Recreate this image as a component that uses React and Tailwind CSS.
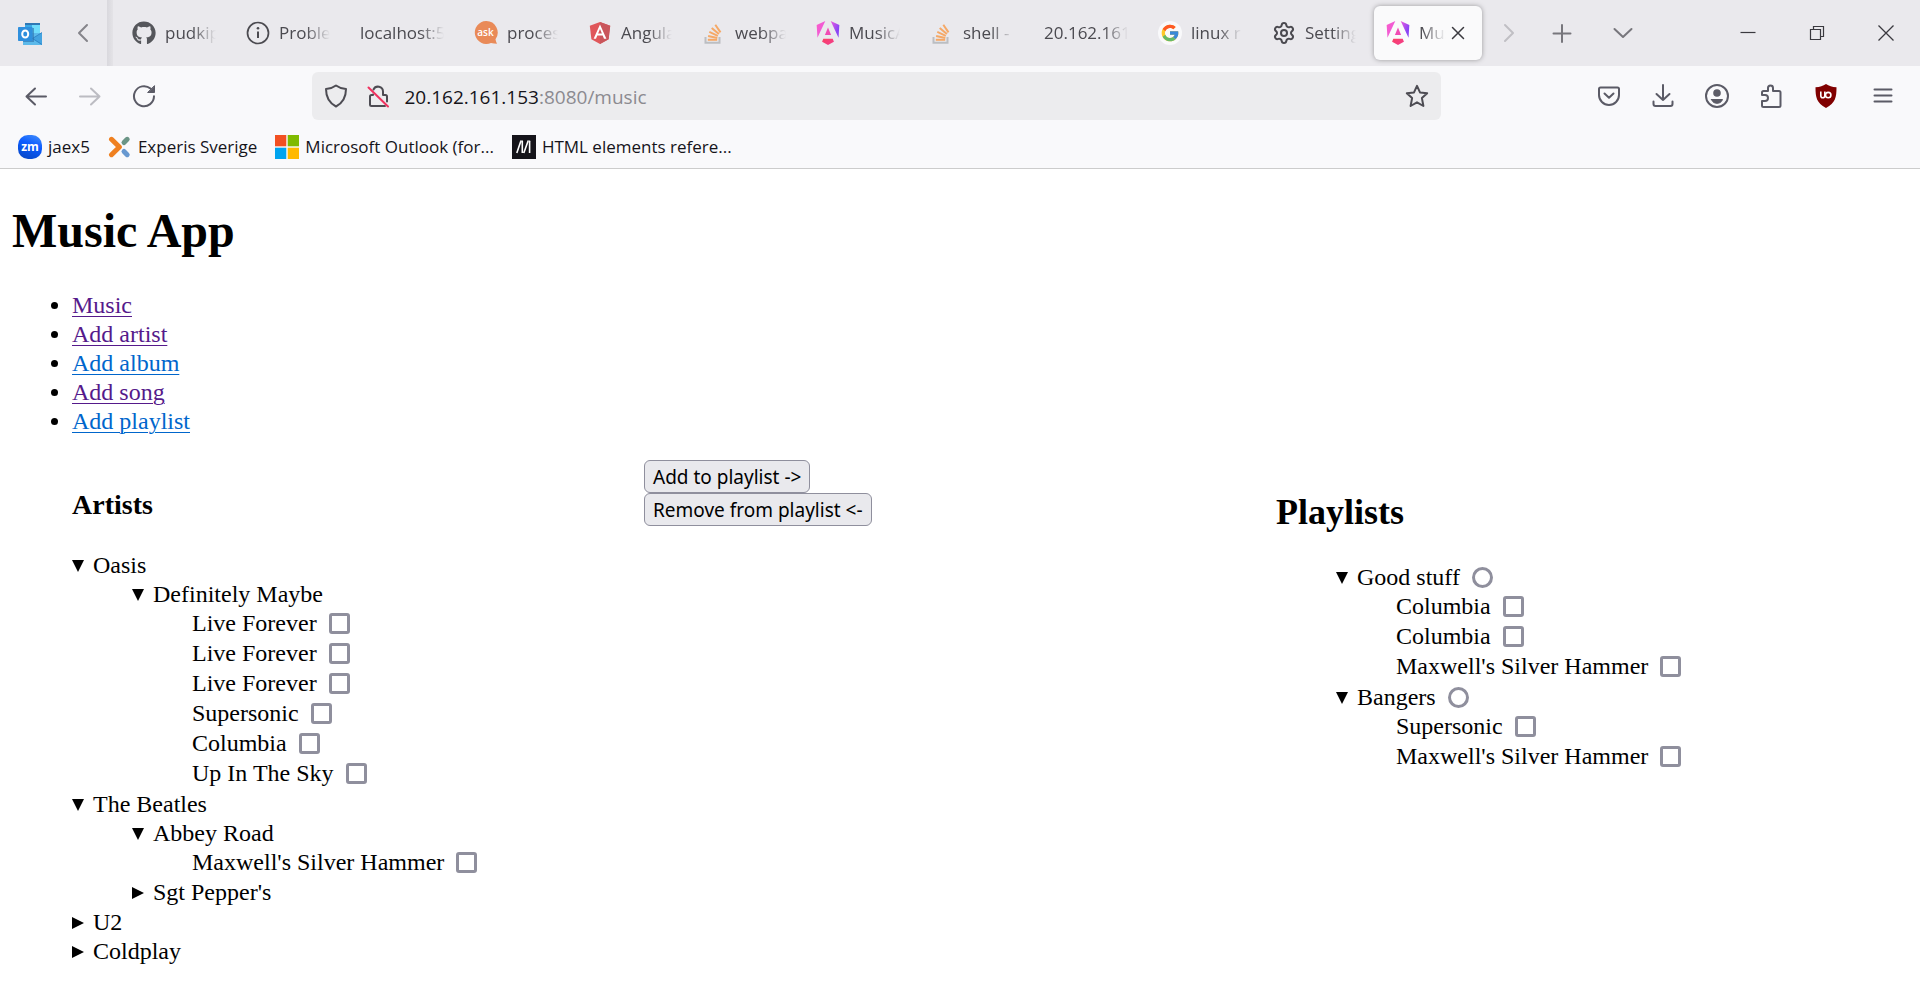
import React from "react";
import { FaGithub } from "react-icons/fa";
import { FcGoogle } from "react-icons/fc";
import { Settings } from "lucide-react";

/* ---------- tab and bookmark icons ---------- */

const OutlookIcon = () => (
  <svg viewBox="0 0 24 24" className="size-6 shrink-0" aria-hidden="true">
    <rect x="7" y="2" width="15" height="3" fill="#2f78b5" />
    <rect x="7" y="4" width="8" height="9" fill="#3aa8e6" />
    <rect x="14" y="4" width="8" height="9" fill="#6fdcfb" />
    <path d="M5 12h19v12H5z" fill="#5cb9ea" />
    <path d="M14 17.500l10-6V24z" fill="#44a3e0" />
    <path d="M24 11.500l-9.500 6 9.500 6" fill="none" stroke="#2d7fc0" strokeWidth="0.800" />
    <path d="M7 7h9v14H5z" fill="#2b6ea8" opacity="0.600" />
    <rect x="0" y="6" width="14.500" height="14" rx="0.800" fill="#2f8fdd" />
    <ellipse cx="7.200" cy="13" rx="3" ry="3.500" fill="none" stroke="#fff" strokeWidth="2" />
  </svg>
);

const InfoIcon = () => (
  <svg viewBox="0 0 24 24" className="size-6 shrink-0" fill="none" stroke="#4b4a50" strokeWidth="1.700" aria-hidden="true">
    <circle cx="12" cy="12" r="10.500" />
    <path d="M12 10.500v6.500" strokeWidth="2" />
    <circle cx="12" cy="7.200" r="1.300" fill="#4b4a50" stroke="none" />
  </svg>
);

const AskIcon = () => (
  <svg viewBox="0 0 24 24" className="size-6 shrink-0" aria-hidden="true">
    <path d="M12 0a11.500 11.500 0 1 0 5 22c2 .3 4 .8 6 .8-.8-1.400-1.300-3-1.500-4.600A11.500 11.500 0 0 0 12 0z" fill="#e98a58" />
    <text x="11.500" y="15" textAnchor="middle" fontSize="10" fontWeight="600" fontFamily="Open Sans, sans-serif" fill="#fff">ask</text>
  </svg>
);

const AngularShieldIcon = () => (
  <svg viewBox="0 0 24 24" className="size-6 shrink-0" aria-hidden="true">
    <path d="M12 1l10.200 3.700-1.600 13.500L12 23l-8.600-4.800L1.800 4.700z" fill="#e0575b" />
    <path d="M12 1l10.200 3.700-1.600 13.500L12 23z" fill="#c9555b" />
    <path d="M12 3.500L5.600 17.800H8l1.300-3.200h5.400l1.300 3.200h2.400zm0 4.600l1.900 4.500h-3.800z" fill="#fff" />
  </svg>
);

const StackIcon = () => (
  <svg viewBox="0 0 24 24" className="size-6 shrink-0" fill="none" aria-hidden="true">
    <path d="M3.500 16v5.800h14V16" stroke="#bcbec2" strokeWidth="2" />
    <g stroke="#f5a866" strokeWidth="2">
      <path d="M5.800 18.800h9.400" />
      <path d="M6.100 15l9.200 1.900" />
      <path d="M7.300 10.900l8.500 3.900" />
      <path d="M9.700 7.100l7.200 6" />
      <path d="M13.300 3.800l5.200 7.600" />
    </g>
  </svg>
);

const AngularIcon = ({ id }) => (
  <svg viewBox="0 0 24 24" className="size-6 shrink-0" aria-hidden="true">
    <defs>
      <linearGradient id={id + "-side"} x1="0" y1="0" x2="1" y2="0.300">
        <stop offset="0" stopColor="#fb5cc8" />
        <stop offset="0.600" stopColor="#e95be0" />
        <stop offset="1" stopColor="#8a45f5" />
      </linearGradient>
      <linearGradient id={id + "-base"} x1="0" y1="0" x2="1" y2="1">
        <stop offset="0" stopColor="#fb3f62" />
        <stop offset="1" stopColor="#f03f92" />
      </linearGradient>
    </defs>
    <path
      fill={"url(#" + id + "-side)"}
      d="M14.692 0l7.832 16.855.814-12.856L14.692 0ZM9.308 0 .662 3.999l.814 12.856L9.308 0Z"
    />
    <path fill="#f04cb4" d="M8.903 13.930h6.198L12 6.396 8.903 13.930Z" />
    <path fill={"url(#" + id + "-base)"} d="M16.712 17.711H7.288l-1.204 2.916L12 24l5.916-3.373-1.204-2.916Z" />
  </svg>
);

const GoogleIcon = () => (
  <span className="flex size-6 shrink-0 items-center justify-center rounded-full bg-[#f9f9fb]">
    <FcGoogle className="size-5 opacity-85" />
  </span>
);

const ZoomIcon = () => (
  <svg viewBox="0 0 24 24" className="size-6 shrink-0" aria-hidden="true">
    <defs>
      <linearGradient id="zm-blue" x1="0.700" y1="0" x2="0.300" y2="1">
        <stop offset="0" stopColor="#3b86fb" />
        <stop offset="0.400" stopColor="#0b5cff" />
        <stop offset="1" stopColor="#0848c8" />
      </linearGradient>
    </defs>
    <rect width="24" height="24" rx="10" fill="url(#zm-blue)" />
    <text x="12" y="15.500" textAnchor="middle" fontSize="12" fontWeight="700" fontFamily="Open Sans, sans-serif" fill="#fff">zm</text>
  </svg>
);

const ExperisIcon = () => (
  <svg viewBox="0 0 24 24" className="size-6 shrink-0" fill="none" strokeWidth="5" strokeLinecap="round" aria-hidden="true">
    <path d="M16 7.500l3.200-3.200" stroke="#6b9586" />
    <path d="M16 16.500l3.200 3.200" stroke="#6798d0" />
    <path d="M3.500 4.300l7.900 7.700-7.900 7.700" stroke="#ef8020" strokeLinejoin="round" />
  </svg>
);

const MicrosoftIcon = () => (
  <svg viewBox="0 0 24 24" className="size-6 shrink-0" aria-hidden="true">
    <path d="M0 0h11.300v11.300H0z" fill="#f25022" />
    <path d="M12.700 0H24v11.300H12.700z" fill="#7fba00" />
    <path d="M0 12.700h11.300V24H0z" fill="#00a4ef" />
    <path d="M12.700 12.700H24V24H12.700z" fill="#ffb900" />
  </svg>
);

const MdnIcon = () => (
  <svg viewBox="0 0 24 24" className="size-6 shrink-0" aria-hidden="true">
    <path d="M0 0h24v24H0z" fill="#15141a" />
    <path d="M4.800 18L8.800 6.200M10.300 6v12M11.800 18L16 6.200M17.600 6v12" fill="none" stroke="#fff" strokeWidth="1.600" />
    <path d="M8 6h3M15.200 6h3" fill="none" stroke="#fff" strokeWidth="1" />
  </svg>
);

/* ---------- toolbar glyphs ---------- */

const Glyph = ({ children, className = "text-[#5b5b66]" }) => (
  <svg
    viewBox="0 0 24 24"
    className={"size-6 shrink-0 " + className}
    fill="none"
    stroke="currentColor"
    strokeWidth="2"
    strokeLinecap="round"
    strokeLinejoin="round"
    aria-hidden="true"
  >
    {children}
  </svg>
);

const IconButton = ({ label, className = "w-[54px]", children }) => (
  <button type="button" aria-label={label} className={"flex h-12 shrink-0 items-center justify-center " + className}>
    {children}
  </button>
);

const tabs = [
  { icon: <FaGithub className="size-6 shrink-0 text-[#55565b]" />, title: "pudkipz" },
  { icon: <InfoIcon />, title: "Problem" },
  { title: "localhost:5000" },
  { icon: <AskIcon />, title: "process" },
  { icon: <AngularShieldIcon />, title: "Angular" },
  { icon: <StackIcon />, title: "webpack" },
  { icon: <AngularIcon id="tab-music" />, title: "MusicApp" },
  { icon: <StackIcon />, title: "shell - how" },
  { title: "20.162.161.153" },
  { icon: <GoogleIcon />, title: "linux run" },
  { icon: <Settings className="size-6 shrink-0 text-[#4b4a50]" strokeWidth={2} />, title: "Settings" },
];

const fade = "[mask-image:linear-gradient(to_right,black_calc(100%-24px),transparent)]";

const TabStrip = () => (
  <div className="flex h-[66px] items-center bg-[#eae9ed] text-[17px] leading-6 text-[#4b4a50]">
    <button type="button" aria-label="Outlook" className="ml-[18px] shrink-0">
      <OutlookIcon />
    </button>
    <IconButton label="Scroll tabs left" className="ml-[17px] w-12">
      <Glyph className="text-[#85848a]">
        <path d="M16 4l-8 8 8 8" />
      </Glyph>
    </IconButton>
    <span className="mr-[7px] h-full w-1.5 shrink-0 bg-linear-to-r from-[#d9d8dd] to-[#e4e3e7]" />
    <div role="tablist" className="flex min-w-0 gap-1.5">
      {tabs.map((tab, i) => (
        <button key={i} type="button" role="tab" aria-selected="false" className="flex h-[54px] w-[108px] shrink-0 items-center gap-[9px] px-3">
          {tab.icon}
          <span className={"min-w-0 flex-1 overflow-hidden text-left whitespace-nowrap " + fade}>{tab.title}</span>
        </button>
      ))}
      <div className="flex h-[54px] w-[108px] shrink-0 items-center rounded-md bg-[#fafafb] pr-3 pl-3 shadow-[0_0_5px_rgba(0,0,0,0.35)]">
        <button type="button" role="tab" aria-selected="true" className="flex min-w-0 flex-1 items-center gap-[9px]">
          <AngularIcon id="tab-active" />
          <span className={"min-w-0 flex-1 overflow-hidden text-left whitespace-nowrap " + fade}>MusicApp</span>
        </button>
        <button type="button" aria-label="Close tab" className="shrink-0">
          <svg viewBox="0 0 24 24" className="size-6" fill="none" stroke="#3a393f" strokeWidth="1.500" strokeLinecap="round" aria-hidden="true">
            <path d="M6.500 6.500l11 11M17.500 6.500l-11 11" />
          </svg>
        </button>
      </div>
    </div>
    <IconButton label="Scroll tabs right" className="w-[53px]">
      <Glyph className="text-[#c0bfc4]">
        <path d="M8 4l8 8-8 8" />
      </Glyph>
    </IconButton>
    <IconButton label="New tab">
      <Glyph className="text-[#77767c]">
        <path d="M12 4v17M3.500 12.500h17" />
      </Glyph>
    </IconButton>
    <IconButton label="List all tabs" className="ml-[7px] w-[54px]">
      <Glyph className="text-[#77767c]">
        <path d="M3.500 8l8.500 8 8.500-8" />
      </Glyph>
    </IconButton>
    <div className="ml-auto flex">
      <IconButton label="Minimise" className="w-[69px]">
        <svg viewBox="0 0 24 24" className="size-6" stroke="#3a393f" strokeWidth="1.200" aria-hidden="true">
          <path d="M4.500 11.500h15" />
        </svg>
      </IconButton>
      <IconButton label="Restore" className="w-[69px]">
        <svg viewBox="0 0 24 24" className="size-6" fill="none" stroke="#3a393f" strokeWidth="1.200" aria-hidden="true">
          <path d="M5.500 8.500h10v10h-10zM8.500 8.500v-3h10v10h-3" />
        </svg>
      </IconButton>
      <IconButton label="Close" className="w-[69px]">
        <svg viewBox="0 0 24 24" className="size-6" stroke="#3a393f" strokeWidth="1.300" aria-hidden="true">
          <path d="M4.500 4.500l15 15M19.500 4.500l-15 15" />
        </svg>
      </IconButton>
    </div>
  </div>
);

const NavBar = () => (
  <div className="flex items-center py-1.5 pr-2">
    <div className="ml-[9px] flex">
      <IconButton label="Back">
        <Glyph>
          <path d="M22 12.500H2.500M11 4.500l-8.500 8 8.500 8" />
        </Glyph>
      </IconButton>
      <IconButton label="Forward">
        <Glyph className="text-[#bcbcc2]">
          <path d="M2 12.500h19.500M13 4.500l8.500 8-8.500 8" />
        </Glyph>
      </IconButton>
      <IconButton label="Reload">
        <Glyph>
          <path d="M18.500 4.600A10 10 0 1 0 22 12.300" />
          <path d="M22.500 2v6.500H16z" fill="currentColor" strokeWidth="1" />
        </Glyph>
      </IconButton>
    </div>
    <div className="mx-auto flex h-12 w-[59%] items-center rounded-md bg-[#ececee] pr-3 pl-3">
      <Glyph className="text-[#4d4c53]">
        <path d="M12 1.500c3 2.200 6.200 3.300 10 3.600 0 8-2.500 13.600-10 17.400C4.500 18.700 2 13.100 2 5.100c3.800-.3 7-1.400 10-3.600z" />
      </Glyph>
      <Glyph className="ml-[18px] text-[#4d4c53]">
        <path d="M7.500 5.500a5 5 0 0 1 9.500 2v3.500h2.500a1.500 1.500 0 0 1 1.500 1.500v5M7 10.500v.500H5.500A1.500 1.500 0 0 0 4 12.500v8A1.500 1.500 0 0 0 5.500 22H19" />
        <path d="M2.500 3.500l19.500 19" stroke="#f0325f" />
      </Glyph>
      <div className="ml-3.5 flex min-w-0 flex-1 pt-0.5 text-[19px] leading-6">
        <span className="text-[#15141a]">20.162.161.153</span>
        <span className="text-[#8b8a90]">:8080/music</span>
      </div>
      <button type="button" aria-label="Bookmark this page">
        <Glyph className="text-[#4d4c53]">
          <path d="M12 1.800l3 6.600 7.200.8-5.300 4.900 1.500 7.900-6.400-3.700-6.400 3.700 1.500-7.900-5.300-4.900 7.200-.8z" />
        </Glyph>
      </button>
    </div>
    <div className="flex">
      <IconButton label="Save to Pocket">
        <Glyph>
          <path d="M3.500 3.500h17a1.500 1.500 0 0 1 1.500 1.500v6a10 10 0 0 1-20 0V5a1.500 1.500 0 0 1 1.500-1.500z" />
          <path d="M7.500 9.500l4.500 4.300 4.500-4.300" />
        </Glyph>
      </IconButton>
      <IconButton label="Downloads">
        <Glyph>
          <path d="M12 1v15M5.500 10l6.500 6 6.500-6M2.500 17.500v2.500a2 2 0 0 0 2 2h15a2 2 0 0 0 2-2v-2.500" />
        </Glyph>
      </IconButton>
      <IconButton label="Account">
        <Glyph>
          <circle cx="12" cy="12" r="11" />
          <circle cx="12" cy="9" r="2.800" fill="currentColor" />
          <path d="M6.500 15.500h11c-1 2.800-3 3.800-5.500 3.800s-4.500-1-5.500-3.800z" fill="currentColor" strokeWidth="1" />
        </Glyph>
      </IconButton>
      <IconButton label="Extensions">
        <Glyph>
          <path d="M3 11V8.500A1.500 1.500 0 0 1 4.500 7H9V4a2.500 2.500 0 0 1 5 0v3h6a1.500 1.500 0 0 1 1.500 1.500v13A1.500 1.500 0 0 1 20 23H4.500A1.500 1.500 0 0 1 3 21.500V17h3a3 3 0 0 0 0-6z" />
        </Glyph>
      </IconButton>
      <IconButton label="uBlock Origin" className="w-[57px]">
        <svg viewBox="0 0 24 24" className="size-6" aria-hidden="true">
          <path d="M12 0c3 2 6 3 10.500 3.200C22.500 13 21.500 19 12 24 2.500 19 1.500 13 1.500 3.200 6 3 9 2 12 0z" fill="#800000" />
          <path d="M6.800 7.500v4.300a2 2 0 0 0 4 0V7.500" fill="none" stroke="#fff" strokeWidth="1.600" />
          <circle cx="14.200" cy="11.100" r="2.700" fill="none" stroke="#fff" strokeWidth="1.600" />
        </svg>
      </IconButton>
      <IconButton label="Menu" className="w-[57px]">
        <Glyph>
          <path d="M3.500 5.500h17M3.500 11.500h17M3.500 17.500h17" />
        </Glyph>
      </IconButton>
    </div>
  </div>
);

const bookmarks = [
  { icon: <ZoomIcon />, title: "jaex5" },
  { icon: <ExperisIcon />, title: "Experis Sverige" },
  { icon: <MicrosoftIcon />, title: "Microsoft Outlook (for..." },
  { icon: <MdnIcon />, title: "HTML elements refere..." },
];

const BookmarksBar = () => (
  <div className="flex h-[42px] items-center gap-[18px] pl-[18px] text-[17px] leading-6 text-[#15141a]">
    {bookmarks.map((b) => (
      <a key={b.title} href="#" className="flex items-center gap-1.5 whitespace-nowrap">
        {b.icon}
        {b.title}
      </a>
    ))}
  </div>
);

/* ---------- music page ---------- */

const links = [
  { label: "Music", visited: true },
  { label: "Add artist", visited: true },
  { label: "Add album", visited: false },
  { label: "Add song", visited: true },
  { label: "Add playlist", visited: false },
];

const artists = [
  {
    name: "Oasis",
    albums: [
      {
        name: "Definitely Maybe",
        songs: ["Live Forever", "Live Forever", "Live Forever", "Supersonic", "Columbia", "Up In The Sky"],
      },
    ],
  },
  {
    name: "The Beatles",
    albums: [
      { name: "Abbey Road", songs: ["Maxwell's Silver Hammer"] },
      { name: "Sgt Pepper's", songs: [] },
    ],
  },
  { name: "U2", albums: [] },
  { name: "Coldplay", albums: [] },
];

const playlists = [
  { name: "Good stuff", songs: ["Columbia", "Columbia", "Maxwell's Silver Hammer"] },
  { name: "Bangers", songs: ["Supersonic", "Maxwell's Silver Hammer"] },
];

const Disclosure = ({ summary, open, children }) => (
  <details open={open}>
    <summary className="flex list-none items-start">
      <svg viewBox="0 0 21 29" className="h-[29px] w-[21px] shrink-0" aria-hidden="true">
        <path d={open ? "M0 9h12l-6 12z" : "M0 9l12 6-12 6z"} />
      </svg>
      {summary}
    </summary>
    {children}
  </details>
);

const SongList = ({ songs }) => (
  <ul className="pl-[60px]">
    {songs.map((song, i) => (
      <li key={i} className="h-[30px]">
        <label className="flex items-start gap-3">
          {song}
          <input type="checkbox" className="mt-1 size-[21px] appearance-none rounded-[3px] border-3 border-[#8f8f9d] bg-white" />
        </label>
      </li>
    ))}
  </ul>
);

const ActionButton = ({ children }) => (
  <button
    type="button"
    className="h-[33px] rounded-md border border-[#8f8f9d] bg-[#e9e9ed] px-2 pt-0.5 font-['Noto_Sans','Open_Sans',sans-serif] text-[19px] leading-[29px] text-black"
  >
    {children}
  </button>
);

const MusicPage = () => (
  <main className="px-3 pt-[33px] font-['Liberation_Serif',serif] text-[24px] leading-[29px] text-black">
    <h1 className="mb-8 text-[48px] leading-[57px] font-bold">Music App</h1>
    <ul className="mb-6 list-disc pl-[60px]">
      {links.map((l) => (
        <li key={l.label}>
          <a
            href="#"
            className={"underline decoration-1 underline-offset-3 " + (l.visited ? "text-[#551a8b]" : "text-[#0066cc]")}
          >
            {l.label}
          </a>
        </li>
      ))}
    </ul>
    <div className="grid grid-cols-3">
      <section className="pt-7 pl-[60px]">
        <h3 className="mb-[29px] text-[28px] leading-[34px] font-bold">Artists</h3>
        {artists.map((artist) => (
          <Disclosure key={artist.name} summary={artist.name} open={artist.albums.length > 0}>
            <div className="pb-px pl-[60px]">
              {artist.albums.map((album) => (
                <Disclosure key={album.name} summary={album.name} open={album.songs.length > 0}>
                  <SongList songs={album.songs} />
                </Disclosure>
              ))}
            </div>
          </Disclosure>
        ))}
      </section>
      <section className="flex flex-col items-start">
        <ActionButton>{"Add to playlist ->"}</ActionButton>
        <ActionButton>{"Remove from playlist <-"}</ActionButton>
      </section>
      <section className="pt-[31px]">
        <h2 className="mb-[30px] text-[36px] leading-[42px] font-bold">Playlists</h2>
        <div className="pl-[60px]">
          {playlists.map((p) => (
            <Disclosure
              key={p.name}
              open
              summary={
                <label className="flex h-[29px] items-start gap-3">
                  {p.name}
                  <input type="radio" name="playlist" className="mt-1 size-[21px] appearance-none rounded-full border-3 border-[#8f8f9d] bg-white" />
                </label>
              }
            >
              <div className="pb-px">
                <SongList songs={p.songs} />
              </div>
            </Disclosure>
          ))}
        </div>
      </section>
    </div>
  </main>
);

export default function App() {
  return (
    <div className="min-h-screen bg-white">
      <header className="border-b border-[#cccccc] bg-[#f9f9fb] font-['Open_Sans','Noto_Sans',sans-serif]">
        <TabStrip />
        <NavBar />
        <BookmarksBar />
      </header>
      <MusicPage />
    </div>
  );
}
